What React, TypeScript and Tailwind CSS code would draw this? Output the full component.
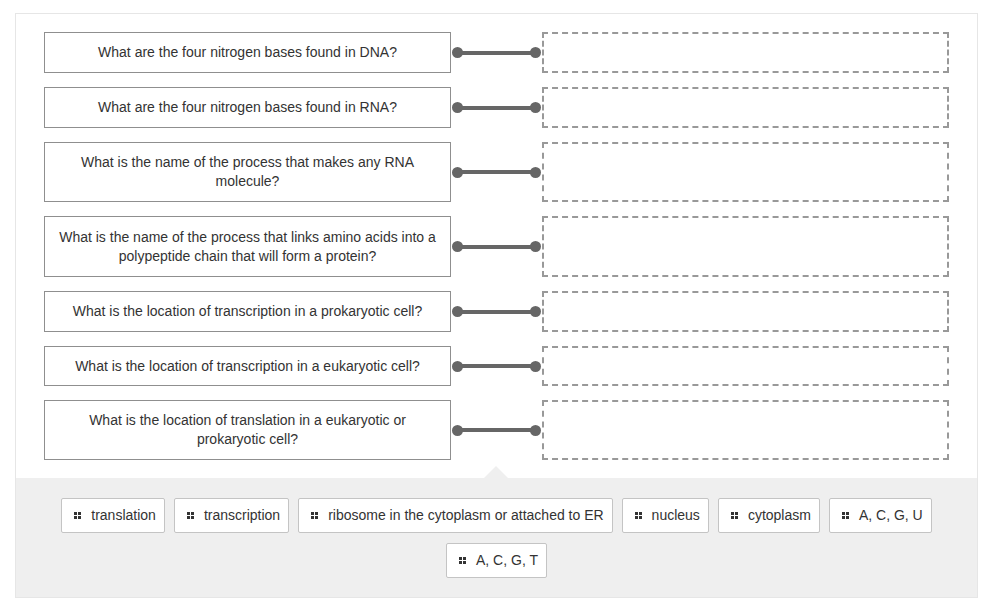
import React from "react"

const rows = [
  { q: "What are the four nitrogen bases found in DNA?", h: "h-[41px]" },
  { q: "What are the four nitrogen bases found in RNA?", h: "h-[41px]" },
  { q: "What is the name of the process that makes any RNA molecule?", h: "h-[60px]" },
  { q: "What is the name of the process that links amino acids into a polypeptide chain that will form a protein?", h: "h-[61px]" },
  { q: "What is the location of transcription in a prokaryotic cell?", h: "h-[41px]" },
  { q: "What is the location of transcription in a eukaryotic cell?", h: "h-[40px]" },
  { q: "What is the location of translation in a eukaryotic or prokaryotic cell?", h: "h-[60px]" },
]

const chips = [
  "translation",
  "transcription",
  "ribosome in the cytoplasm or attached to ER",
  "nucleus",
  "cytoplasm",
  "A, C, G, U",
  "A, C, G, T",
]

function Grip() {
  return (
    <svg width="7" height="7" viewBox="0 0 7 7" className="shrink-0">
      <rect x="0" y="0" width="3" height="3" fill="#333" />
      <rect x="4" y="0" width="3" height="3" fill="#333" />
      <rect x="0" y="4" width="3" height="3" fill="#333" />
      <rect x="4" y="4" width="3" height="3" fill="#333" />
    </svg>
  )
}

export default function App() {
  return (
    <div className="w-[1002px] h-[604px] bg-white overflow-hidden font-['Liberation_Sans',Arial,sans-serif] text-[#333]">
      <div className="pt-[13px] pl-[15px]">
        <div className="w-[963px] border border-[#e6e6e6] bg-white">
          {/* matching rows */}
          <div className="flex flex-col gap-[14px] pt-[18px] pb-[18px] px-[28px]">
            {rows.map((r, i) => (
              <div key={i} className={`flex items-center ${r.h}`}>
                <div className="w-[407px] h-full border border-[#8f8f8f] flex items-center justify-center px-[12px] text-center text-[14px] leading-[19px]">
                  {r.q}
                </div>
                <div className="w-[91px] h-full flex items-center px-[1px]">
                  <div className="relative w-full h-[4px] bg-[#666] mx-[5px]">
                    <span className="absolute -left-[5px] -top-[3.5px] w-[11px] h-[11px] rounded-full bg-[#666]" />
                    <span className="absolute -right-[5px] -top-[3.5px] w-[11px] h-[11px] rounded-full bg-[#666]" />
                  </div>
                </div>
                <div className="w-[407px] h-full border-2 border-dashed border-[#999]" />
              </div>
            ))}
          </div>

          {/* answer tray */}
          <div className="relative bg-[#efefef] pt-[20px] pb-[19px] px-[20px]">
            <span className="absolute left-[468px] -top-[12px] w-0 h-0 border-l-[12px] border-r-[12px] border-b-[12px] border-transparent border-b-[#efefef]" />
            <div className="flex flex-wrap justify-center gap-x-[9px] gap-y-[10px]">
              {chips.map((c) => (
                <div
                  key={c}
                  className="h-[35px] flex items-center gap-[10px] pl-[12px] pr-[8px] bg-white border border-[#c4c4c4] rounded-[2px] text-[14px]"
                >
                  <Grip />
                  <span>{c}</span>
                </div>
              ))}
            </div>
          </div>
        </div>
      </div>
    </div>
  )
}
